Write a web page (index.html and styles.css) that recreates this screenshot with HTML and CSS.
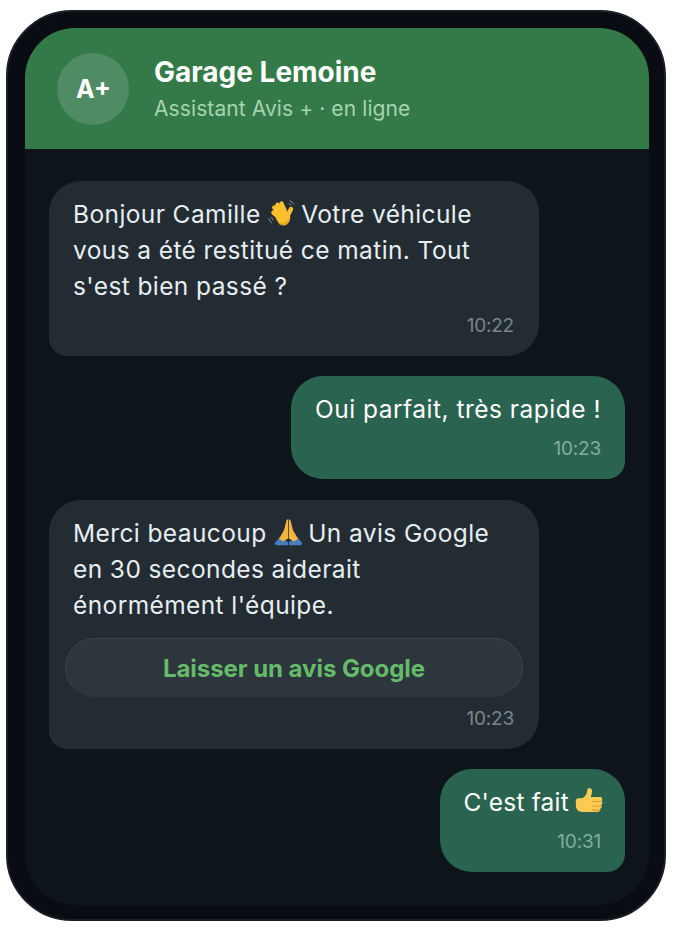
FILE: index.html
```html
<!DOCTYPE html>
<html lang="fr">
<head>
<meta charset="utf-8">
<title>Garage Lemoine</title>
<link rel="stylesheet" href="styles.css">
</head>
<body>
<div class="phone">
  <div class="screen">
    <header class="head">
      <div class="avatar">A+</div>
      <div class="who">
        <div class="name">Garage Lemoine</div>
        <div class="status">Assistant Avis + · en ligne</div>
      </div>
    </header>
    <main class="chat">
      <div class="msg in">
        <p class="text">Bonjour Camille <svg class="emoji wave" viewBox="0 0 32 32"><path d="M2 21c.5 2.500 1.500 4 3.500 5.500M5 20c.5 1.500 1 2.500 2 3.500M25 2c2 .5 3.500 2 4.500 4M24 5c1 .3 2 1 2.500 2" fill="none" stroke="#8b9298" stroke-width="1.100"/><g stroke="#fbc02d" stroke-width="4.800" stroke-linecap="round" fill="none"><path d="M16 18L8 9.500M17 15L11.500 6.500M20 14L16 5M14 21L7 15"/><path d="M23 18l3.500-7"/></g><path d="M11 17c3-4 9-5 13-2 2 2 2 6 1 9-1.500 4-5 6-8.500 5-3-1-4-3-6-6-1-2-1-4 .5-6z" fill="#fbc02d"/><path d="M13 27c4 2 9 1 11-4" stroke="#e09a1c" stroke-width="1.500" fill="none"/></svg> Votre véhicule<br>vous a été restitué ce matin. Tout<br>s'est bien passé ?</p>
        <div class="time">10:22</div>
      </div>
      <div class="msg out">
        <p class="text">Oui parfait, très rapide !</p>
        <div class="time">10:23</div>
      </div>
      <div class="msg in later">
        <p class="text">Merci beaucoup <svg class="emoji pray" viewBox="0 0 32 32"><path d="M1 27.500L6.500 21l4 2.500L15.500 26.500V30H4c-2 0-3.500-1-3-2.500zM31 27.500L25.500 21l-4 2.500L16.500 26.500V30H28c2 0 3.500-1 3-2.500z" fill="#4b7cc0"/><path d="M15.600 1.500c-1.200 0-1.800 1-2.200 2.500L11 13.500 5.500 23l4.500 3 5.600-3.500zM16.400 1.500c1.200 0 1.800 1 2.200 2.500L21 13.500 26.500 23 22 26l-5.600-3.500z" fill="#f3b53d"/></svg> Un avis Google<br>en 30 secondes aiderait<br>énormément l'équipe.</p>
        <a class="cta">Laisser un avis Google</a>
        <div class="time">10:23</div>
      </div>
      <div class="msg out">
        <p class="text short">C'est fait <svg class="emoji thumb" viewBox="0 0 32 32"><path d="M2 15.500c0-2 1-3 3-3h3c2 0 4-2 5.500-4.500 1-2 1-4 1.500-5.500.5-1.500 2.500-2 4-.5 1.500 1.500 1 5-.5 9H29c2.500 0 2.500 3 1.500 4.500 1.500 1.500 1 3.500-.5 4.500 1 1.500.5 3-1 4 .5 2-1 3.500-3 3.500H10c-4 0-6-1-7-3.500C2 23 2 19 2 15.500z" fill="#fbcb52"/><path d="M20 16h10M20 21h9.500M20 25.500h8.500" stroke="#dd9a30" stroke-width="1.300" fill="none"/></svg></p>
        <div class="time">10:31</div>
      </div>
    </main>
  </div>
</div>
</body>
</html>
```

FILE: styles.css
```css
* { box-sizing: border-box; }
html, body { margin: 0; height: 100%; background: #fff; }
body {
  font-family: "Inter", "Noto Sans", sans-serif;
  padding: 10px 8px 9px 6px;
  overflow: hidden;
}
.phone {
  width: 660px;
  height: 911px;
  padding: 16px 15px 14px 17px;
  background: #090d13;
  border: 2px solid #1b1f25;
  border-radius: 66px;
}
.screen {
  height: 877px;
  width: 624px;
  background: #0d141a;
  border-radius: 50px;
  overflow: hidden;
}
.head {
  height: 121px;
  background: #347a48;
  display: flex;
  align-items: center;
  gap: 25px;
  padding: 0 32px;
}
.avatar {
  width: 72px;
  height: 72px;
  border-radius: 50%;
  background: #4f8c64;
  color: #fff;
  font-size: 25px;
  font-weight: 700;
  display: flex;
  align-items: center;
  justify-content: center;
  padding-left: 1px;
}
.name {
  color: #fff;
  font-size: 28px;
  font-weight: 700;
  line-height: 36px;
}
.status {
  color: #a6d4ad;
  font-size: 21px;
  line-height: 30px;
  margin-top: 4px;
  letter-spacing: 0.1px;
}
.chat {
  display: flex;
  flex-direction: column;
  gap: 20px;
  padding: 32px 24px 0;
}
.msg {
  padding: 15px 24px 17px;
  border-radius: 32px;
}
.in {
  align-self: flex-start;
  width: 490px;
  background: #232c33;
  color: #e7edf0;
  border-bottom-left-radius: 18px;
}
.later { margin-top: 1px; }
.out {
  align-self: flex-end;
  background: #2a6350;
  color: #fff;
  border-bottom-right-radius: 18px;
}
.text {
  margin: 0;
  font-size: 24.500px;
  line-height: 36px;
  letter-spacing: 0.4px;
  white-space: nowrap;
}
.out .text { letter-spacing: 0.5px; }
.out .short { letter-spacing: 0.2px; }
.emoji {
  width: 29px;
  height: 29px;
  vertical-align: -5px;
}
.wave { margin: 0 -2px 0 -1px; }
.pray { margin: 0 -2px 0 0; }
.thumb { margin: 0 -2px 0 -2px; }
.time {
  margin-top: 9px;
  font-size: 19px;
  line-height: 26px;
  text-align: right;
  letter-spacing: -0.2px;
  color: #7c868c;
}
.in .time { padding-right: 1px; }
.out .time { color: #82ad9f; }
.cta {
  display: block;
  margin: 15px -8px 0;
  height: 59px;
  line-height: 59px;
  border-radius: 30px;
  background: #2c363c;
  border: 1px solid #3a444a;
  border-bottom-color: #2c363c;
  text-align: center;
  color: #66bb6a;
  font-size: 24px;
  font-weight: 700;
  letter-spacing: -0.05px;
}
```
